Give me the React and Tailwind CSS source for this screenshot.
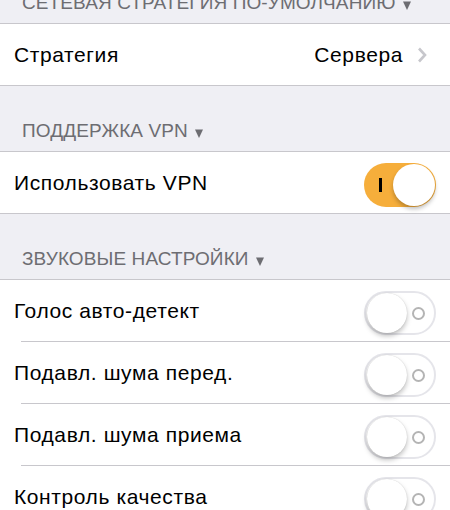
import React, { useState } from 'react';

const FONT = { fontFamily: '"Liberation Sans", Arial, sans-serif' };

function Header({ title, className = '' }) {
  return (
    <div className={`h-[65px] flex items-end pl-[22px] pb-[11px] text-[19px] leading-none tracking-[0.1px] text-[#6d6d72] uppercase ${className}`}>
      <span>{title}</span>
      <svg width="8" height="9" viewBox="0 0 8 9" className="ml-[7px] mb-[2px]">
        <path d="M0 0.5 H8 L4 9 Z" fill="#6d6d72" />
      </svg>
    </div>
  );
}

function Toggle({ on, onClick }) {
  return (
    <button
      onClick={onClick}
      className={`relative mt-[5px] w-[72px] h-[44px] rounded-full flex items-center ${on ? 'bg-[#f6ae3b]' : 'bg-white border-2 border-[#e5e5ea]'}`}
    >
      {on ? (
        <>
          <span className="ml-[15px] w-[2.5px] h-[14px] bg-black" />
          <span className="absolute right-[1px] top-[1px] w-[42px] h-[42px] rounded-full bg-white shadow-[0_3px_4px_rgba(0,0,0,0.25)]" />
        </>
      ) : (
        <>
          <span className="absolute left-[1px] top-[0px] w-[40px] h-[40px] rounded-full bg-white shadow-[0_3px_5px_rgba(0,0,0,0.25),0_0_1px_rgba(0,0,0,0.2)]" />
          <span className="ml-auto mr-[9px] w-[13px] h-[13px] rounded-full border-2 border-[#b4b4b4]" />
        </>
      )}
    </button>
  );
}

function Row({ label, children }) {
  return (
    <div className="h-[61px] flex items-center pl-[14px] pr-[14px]">
      <span className="flex-1 text-[21px] tracking-[0.6px] text-black">{label}</span>
      {children}
    </div>
  );
}

function Chevron() {
  return (
    <svg width="10" height="16" viewBox="0 0 10 16" className="ml-[14px] mr-[9px]">
      <path d="M2 1.5 L8 8 L2 14.5" fill="none" stroke="#c7c7cc" strokeWidth="2.6" />
    </svg>
  );
}

export default function App() {
  const [vpn, setVpn] = useState(true);
  const [sound, setSound] = useState([false, false, false, false]);
  const soundLabels = ['Голос авто-детект', 'Подавл. шума перед.', 'Подавл. шума приема', 'Контроль качества'];

  const flip = (i) => setSound(s => s.map((v, j) => (j === i ? !v : v)));

  return (
    <div style={FONT} className="w-[450px] h-[510px] overflow-hidden bg-[#efeff4]">
      <Header title="Сетевая стратегия по-умолчанию" className="-mt-[42px]" />
      <div className="bg-white border-y border-[#c8c7cc]">
        <Row label="Стратегия">
          <span className="text-[21px] tracking-[0.6px] text-black">Сервера</span>
          <Chevron />
        </Row>
      </div>

      <Header title="Поддержка VPN" />
      <div className="bg-white border-y border-[#c8c7cc]">
        <Row label="Использовать VPN">
          <Toggle on={vpn} onClick={() => setVpn(!vpn)} />
        </Row>
      </div>

      <Header title="Звуковые настройки" />
      <div className="bg-white border-t border-[#c8c7cc]">
        {soundLabels.map((label, i) => (
          <div key={label}>
            {i > 0 && <div className="ml-[21px] h-px bg-[#c8c7cc]" />}
            <Row label={label}>
              <Toggle on={sound[i]} onClick={() => flip(i)} />
            </Row>
          </div>
        ))}
      </div>
    </div>
  );
}
